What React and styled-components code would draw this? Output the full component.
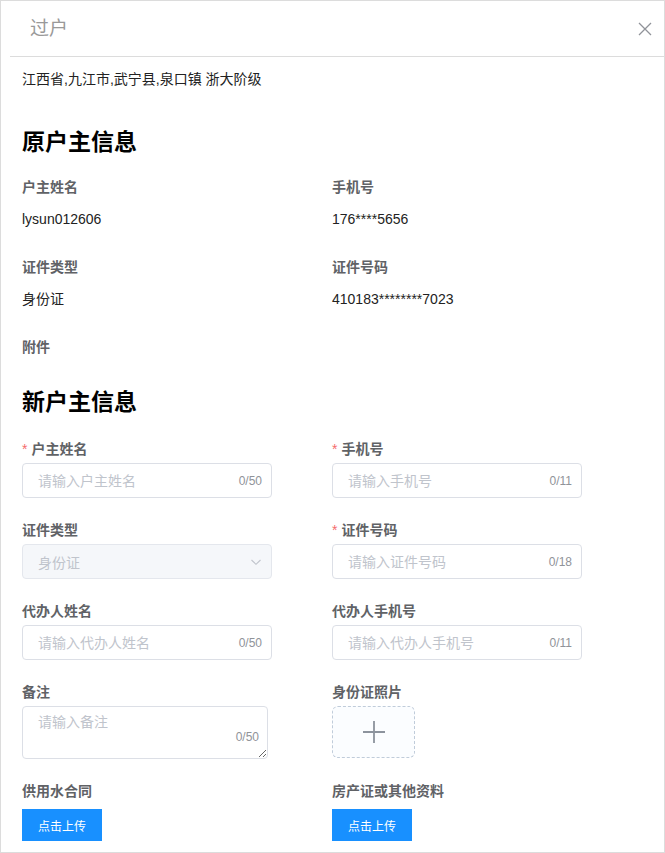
import styled, { createGlobalStyle } from "styled-components";

const GlobalStyle = createGlobalStyle`
   body {
      margin: 0;
      background: #fff;
      font-family: "Liberation Sans", "Noto Sans CJK SC", sans-serif;
   }
   * {
      box-sizing: border-box;
   }
`;

const Frame = styled.div`
   width: 665px;
   height: 853px;
   border: 1px solid #dcdcdc;
   background: #fff;
   overflow: hidden;
`;

const Header = styled.div`
   margin-left: 9px;
   height: 56px;
   border-bottom: 1px solid #dcdcdc;
   display: flex;
   align-items: center;
   justify-content: space-between;
   padding: 0 11px 0 20px;
`;

const Title = styled.span`
   font-size: 19px;
   color: #999;
   line-height: 24px;
`;

const Close = styled.button`
   border: 0;
   background: transparent;
   padding: 0;
   width: 16px;
   height: 16px;
   display: flex;
   align-items: center;
   justify-content: center;
   cursor: pointer;
`;

const Body = styled.div`
   padding: 12px 21px 0;
`;

const Address = styled.div`
   font-size: 14px;
   line-height: 20px;
   color: #222;
`;

const Heading = styled.h2`
   margin: ${p => p.$top}px 0 ${p => p.$bottom}px;
   font-size: 23px;
   line-height: 30px;
   font-weight: 700;
   color: #000;
`;

const InfoGrid = styled.div`
   display: grid;
   grid-template-columns: 310px 310px;
`;

const InfoItem = styled.div`
   height: ${p => (p.$short ? 20 : 80)}px;
`;

const Label = styled.div`
   font-size: 14px;
   line-height: 20px;
   font-weight: 700;
   color: #606266;
`;

const Required = styled.span`
   color: #f56c6c;
   margin-right: 4px;
   font-weight: 400;
`;

const Value = styled.div`
   margin-top: 12px;
   font-size: 14px;
   line-height: 20px;
   color: #222;
`;

const FormGrid = styled.div`
   display: grid;
   grid-template-columns: 310px 310px;
   row-gap: 22px;
`;

const Field = styled.div`
   display: flex;
   flex-direction: column;
   align-items: flex-start;
   gap: ${p => (p.$wide ? 8 : 4)}px;
`;

const InputBox = styled.div`
   width: 250px;
   height: 35px;
   display: flex;
   align-items: center;
   border: 1px solid ${p => (p.$disabled ? "#e4e7ed" : "#dcdfe6")};
   border-radius: 4px;
   background: ${p => (p.$disabled ? "#f5f7fa" : "#fff")};
   padding: 0 9px 0 15px;
`;

const Input = styled.input`
   flex: 1;
   min-width: 0;
   border: 0;
   outline: none;
   background: transparent;
   padding: 0;
   font: inherit;
   font-size: 14px;
   color: #606266;

   &::placeholder {
      color: #c0c4cc;
   }
`;

const Count = styled.span`
   font-size: 12px;
   color: #909399;
`;

const SelectText = styled.span`
   flex: 1;
   font-size: 14px;
   color: #c0c4cc;
`;

const TextareaWrap = styled.div`
   position: relative;
   width: 246px;
   height: 53px;
`;

const Textarea = styled.textarea`
   width: 100%;
   height: 100%;
   display: block;
   border: 1px solid #dcdfe6;
   border-radius: 4px;
   padding: 5px 15px;
   font: inherit;
   font-size: 14px;
   line-height: 1.5;
   color: #606266;
   outline: none;

   &::placeholder {
      color: #c0c4cc;
   }
`;

const AreaCount = styled.span`
   position: absolute;
   right: 9px;
   bottom: 14px;
   font-size: 12px;
   line-height: 16px;
   color: #909399;
`;

const Upload = styled.div`
   width: 83px;
   height: 52px;
   border: 1px dashed #c0ccda;
   border-radius: 6px;
   background: #fbfdff;
   display: flex;
   align-items: center;
   justify-content: center;
`;

const Button = styled.button`
   height: 32px;
   padding: 0 16px;
   border: 0;
   background: #1890ff;
   color: #fff;
   font: inherit;
   font-size: 12px;
   cursor: pointer;
`;

const Chevron = () => (
   <svg width="12" height="12" viewBox="0 0 12 12">
      <path d="M1.5 4 L6 8.3 L10.5 4" fill="none" stroke="#c0c4cc" strokeWidth="1.1" />
   </svg>
);

const TextInput = ({ placeholder, max }) => (
   <InputBox>
      <Input placeholder={placeholder} />
      <Count>0/{max}</Count>
   </InputBox>
);

const App = () => {
   return (
      <Frame>
         <GlobalStyle />
         <Header>
            <Title>过户</Title>
            <Close>
               <svg width="14" height="14" viewBox="0 0 14 14">
                  <path d="M1 1 L13 13 M13 1 L1 13" stroke="#909399" strokeWidth="1.3" />
               </svg>
            </Close>
         </Header>
         <Body>
            <Address>江西省,九江市,武宁县,泉口镇 浙大阶级</Address>

            <Heading $top={38} $bottom={20}>原户主信息</Heading>
            <InfoGrid>
               <InfoItem>
                  <Label>户主姓名</Label>
                  <Value>lysun012606</Value>
               </InfoItem>
               <InfoItem>
                  <Label>手机号</Label>
                  <Value>176****5656</Value>
               </InfoItem>
               <InfoItem>
                  <Label>证件类型</Label>
                  <Value>身份证</Value>
               </InfoItem>
               <InfoItem>
                  <Label>证件号码</Label>
                  <Value>410183********7023</Value>
               </InfoItem>
               <InfoItem $short>
                  <Label>附件</Label>
               </InfoItem>
            </InfoGrid>

            <Heading $top={30} $bottom={22}>新户主信息</Heading>
            <FormGrid>
               <Field>
                  <Label><Required>*</Required>户主姓名</Label>
                  <TextInput placeholder="请输入户主姓名" max={50} />
               </Field>
               <Field>
                  <Label><Required>*</Required>手机号</Label>
                  <TextInput placeholder="请输入手机号" max={11} />
               </Field>
               <Field>
                  <Label>证件类型</Label>
                  <InputBox $disabled>
                     <SelectText>身份证</SelectText>
                     <Chevron />
                  </InputBox>
               </Field>
               <Field>
                  <Label><Required>*</Required>证件号码</Label>
                  <TextInput placeholder="请输入证件号码" max={18} />
               </Field>
               <Field>
                  <Label>代办人姓名</Label>
                  <TextInput placeholder="请输入代办人姓名" max={50} />
               </Field>
               <Field>
                  <Label>代办人手机号</Label>
                  <TextInput placeholder="请输入代办人手机号" max={11} />
               </Field>
               <Field>
                  <Label>备注</Label>
                  <TextareaWrap>
                     <Textarea placeholder="请输入备注" />
                     <AreaCount>0/50</AreaCount>
                  </TextareaWrap>
               </Field>
               <Field>
                  <Label>身份证照片</Label>
                  <Upload>
                     <svg width="24" height="24" viewBox="0 0 24 24">
                        <path d="M12 1 V23 M1 12 H23" stroke="#8c939d" strokeWidth="1.8" />
                     </svg>
                  </Upload>
               </Field>
               <Field $wide>
                  <Label>供用水合同</Label>
                  <Button>点击上传</Button>
               </Field>
               <Field $wide>
                  <Label>房产证或其他资料</Label>
                  <Button>点击上传</Button>
               </Field>
            </FormGrid>
         </Body>
      </Frame>
   );
};

export default App;
